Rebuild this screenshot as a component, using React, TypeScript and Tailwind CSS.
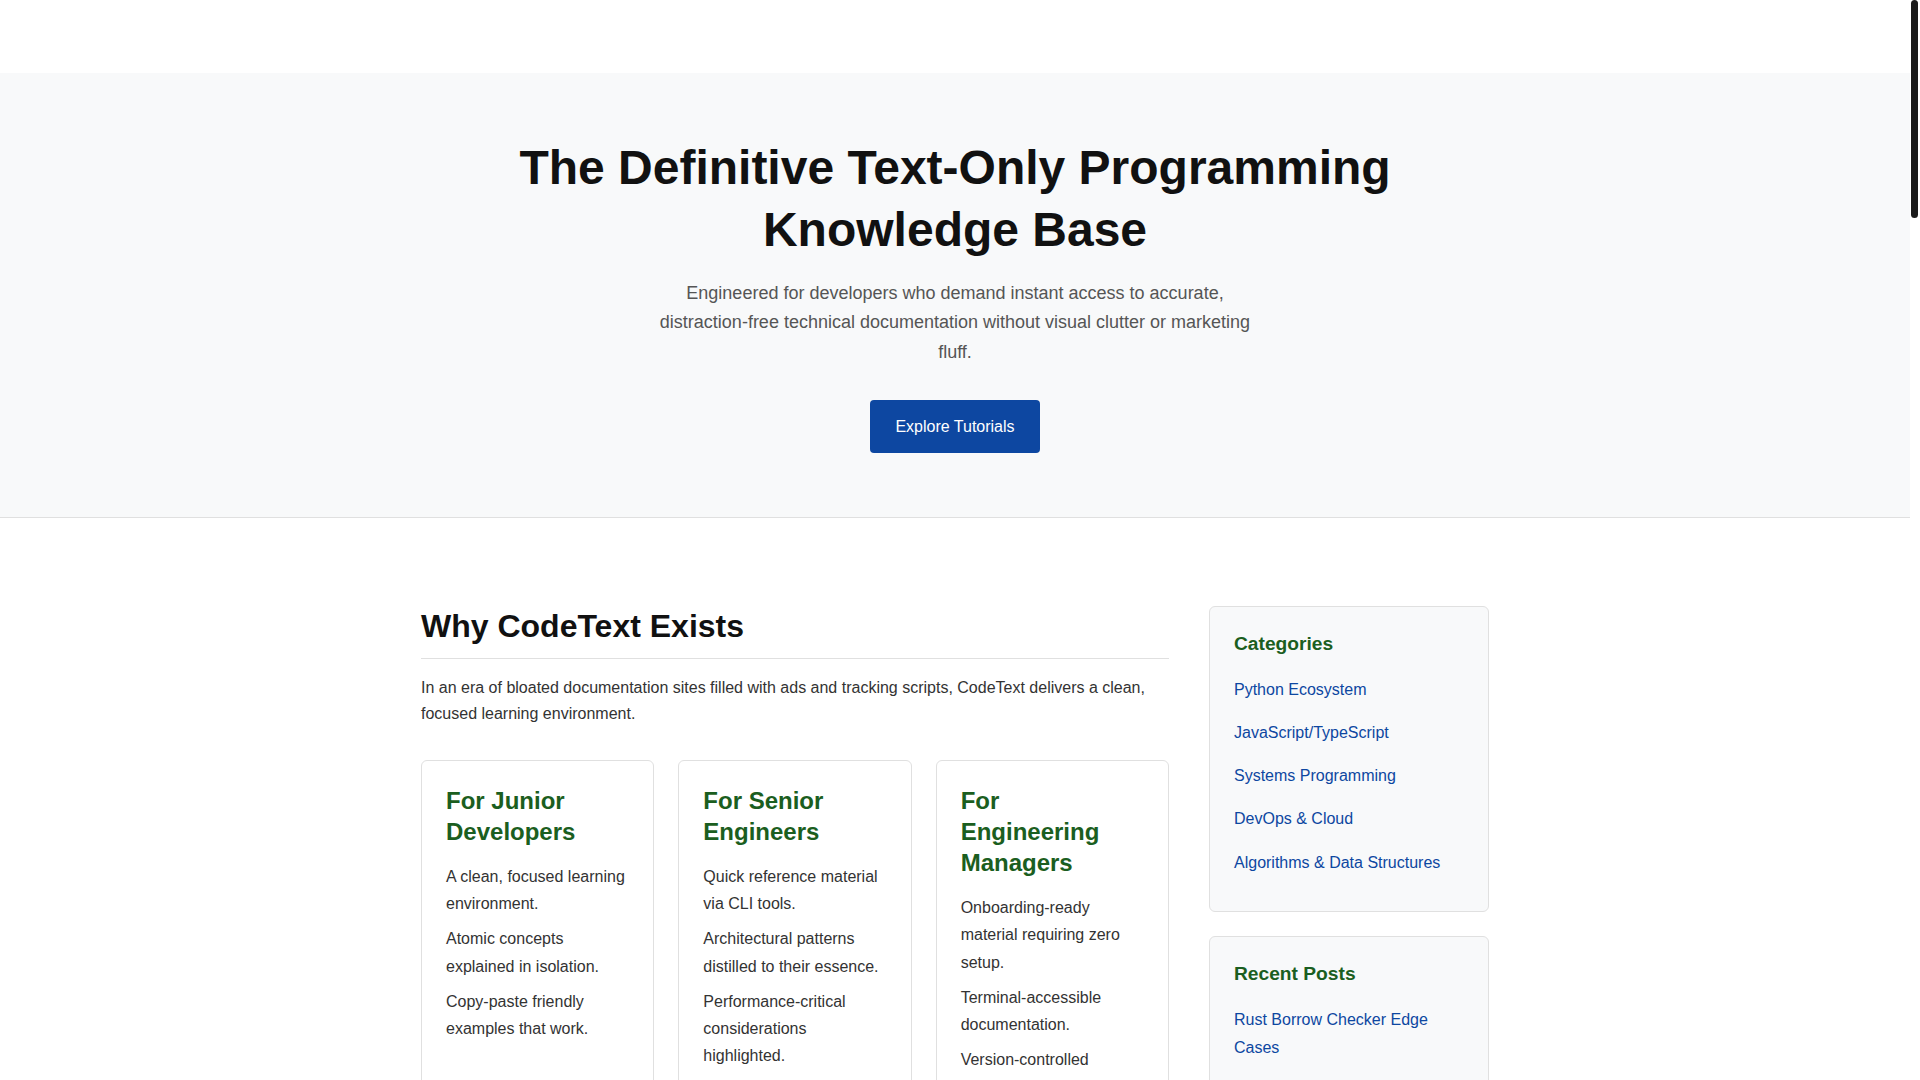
import React from 'react';

const audiences = [
  {
    title: 'For Junior Developers',
    points: [
      'A clean, focused learning environment.',
      'Atomic concepts explained in isolation.',
      'Copy-paste friendly examples that work.'
    ]
  },
  {
    title: 'For Senior Engineers',
    points: [
      'Quick reference material via CLI tools.',
      'Architectural patterns distilled to their essence.',
      'Performance-critical considerations highlighted.'
    ]
  },
  {
    title: 'For Engineering Managers',
    points: [
      'Onboarding-ready material requiring zero setup.',
      'Terminal-accessible documentation.',
      'Version-controlled content your team can review.'
    ]
  }
];

const categories = [
  'Python Ecosystem',
  'JavaScript/TypeScript',
  'Systems Programming',
  'DevOps & Cloud',
  'Algorithms & Data Structures'
];

const recentPosts = [
  'Rust Borrow Checker Edge Cases',
  'Understanding the Python GIL',
  'TypeScript Conditional Types',
  'Docker Multi-Stage Builds',
  'Big-O Analysis in Practice'
];

const tutorials = [
  {
    title: 'Mastering Python Generators',
    meta: 'Python Ecosystem · 12 min read',
    text: 'Lazy evaluation, yield expressions and pipeline composition explained with minimal, runnable examples.'
  },
  {
    title: 'The JavaScript Event Loop, Step by Step',
    meta: 'JavaScript/TypeScript · 15 min read',
    text: 'Microtasks, macrotasks and rendering phases traced through real code instead of diagrams.'
  },
  {
    title: 'Memory Layout of Structs in C and Rust',
    meta: 'Systems Programming · 18 min read',
    text: 'Alignment, padding and field ordering, with the exact byte offsets printed by the compiler.'
  },
  {
    title: 'Writing Idempotent Deployment Scripts',
    meta: 'DevOps & Cloud · 10 min read',
    text: 'Patterns for shell and Terraform scripts that are safe to run twice, and what to do when they are not.'
  },
  {
    title: 'Dynamic Programming Without the Magic',
    meta: 'Algorithms & Data Structures · 20 min read',
    text: 'From naive recursion to memoization to tabulation, one transformation at a time.'
  },
  {
    title: 'Type Narrowing in TypeScript',
    meta: 'JavaScript/TypeScript · 9 min read',
    text: 'Control flow analysis, discriminated unions and user-defined type guards in plain terms.'
  }
];

const principles = [
  'No images, no videos, no interactive widgets: every page renders in any terminal.',
  'Every example is tested in CI against the language version it claims to support.',
  'Articles are versioned in Git, so every change is reviewable and reversible.',
  'No tracking, no ads, no cookie banners. Ever.'
];

function SectionTitle({ children }: { children: React.ReactNode }) {
  return (
    <h2 className="text-[32px] font-bold leading-[1.3] text-[#111111] pb-[10px] border-b border-[#e0e0e0]">
      {children}
    </h2>
  );
}

function SideBox({ title, items }: { title: string; items: string[] }) {
  return (
    <div className="bg-[#f8f9fa] border border-[#e0e0e0] rounded-md px-6 pt-6 pb-[27px] mb-6">
      <h3 className="text-[19.2px] font-bold leading-[25px] text-[#1b5e20] mb-3">
        {title}
      </h3>
      <ul>
        {items.map((item) => (
          <li key={item} className="py-[7.6px] text-base leading-[28px]">
            <a href="#" className="text-[#0d47a1]">
              {item}
            </a>
          </li>
        ))}
      </ul>
    </div>
  );
}

export default function App() {
  return (
    <div className="flex h-screen overflow-hidden bg-white font-['Liberation_Sans',Arial,sans-serif] text-[#333333]">
      <div className="flex-1 min-w-0">
        <header className="h-[73px] bg-white"></header>

        <section className="bg-[#f8f9fa] border-b border-[#e0e0e0] pt-16 pb-16 px-4 text-center">
          <h1 className="text-5xl font-bold leading-[1.3] text-[#111111] max-w-[900px] mx-auto">
            The Definitive Text-Only Programming Knowledge Base
          </h1>
          <p className="mt-[17px] mb-[33px] max-w-[600px] mx-auto text-lg leading-[29.5px] text-[#555555]">
            Engineered for developers who demand instant access to accurate,
            distraction-free technical documentation without visual clutter or
            marketing fluff.
          </p>
          <a
            href="#"
            className="inline-block bg-[#0d47a1] text-white text-base leading-[25px] px-[25px] py-[14px] rounded"
          >
            Explore Tutorials
          </a>
        </section>

        <div className="max-w-[1100px] mx-auto px-4 pt-[88px] pb-20 grid grid-cols-[1fr_280px] gap-10 items-start">
          <main>
            <section>
              <SectionTitle>Why CodeText Exists</SectionTitle>
              <p className="mt-4 mb-8 text-base leading-[1.65]">
                In an era of bloated documentation sites filled with ads and
                tracking scripts, CodeText delivers a clean, focused learning
                environment.
              </p>
              <div className="grid grid-cols-3 gap-6">
                {audiences.map((a) => (
                  <div
                    key={a.title}
                    className="border border-[#e0e0e0] rounded-md p-6 bg-white"
                  >
                    <h3 className="text-2xl font-bold leading-[1.3] text-[#1b5e20] mb-4">
                      {a.title}
                    </h3>
                    <ul>
                      {a.points.map((p) => (
                        <li key={p} className="mb-2 text-base leading-[1.7]">
                          {p}
                        </li>
                      ))}
                    </ul>
                  </div>
                ))}
              </div>
            </section>

            <section className="mt-16">
              <SectionTitle>Featured Tutorials</SectionTitle>
              <div className="mt-6 flex flex-col gap-6">
                {tutorials.map((t) => (
                  <article key={t.title} className="border-b border-[#eeeeee] pb-6">
                    <h3 className="text-xl font-bold leading-[1.4]">
                      <a href="#" className="text-[#0d47a1]">
                        {t.title}
                      </a>
                    </h3>
                    <p className="mt-1 text-sm text-[#777777]">{t.meta}</p>
                    <p className="mt-2 text-base leading-[1.7]">{t.text}</p>
                  </article>
                ))}
              </div>
            </section>

            <section className="mt-16">
              <SectionTitle>Core Principles</SectionTitle>
              <ol className="mt-6 list-decimal pl-6">
                {principles.map((p) => (
                  <li key={p} className="mb-3 text-base leading-[1.7]">
                    {p}
                  </li>
                ))}
              </ol>
            </section>
          </main>

          <aside>
            <SideBox title="Categories" items={categories} />
            <SideBox title="Recent Posts" items={recentPosts} />
          </aside>
        </div>
      </div>

      {/* page scrollbar as shown in the capture */}
      <div className="w-[10px] shrink-0 h-screen bg-white">
        <div className="w-[7px] h-[218px] ml-px rounded-full bg-[#1a1a1a]"></div>
      </div>
    </div>
  );
}
